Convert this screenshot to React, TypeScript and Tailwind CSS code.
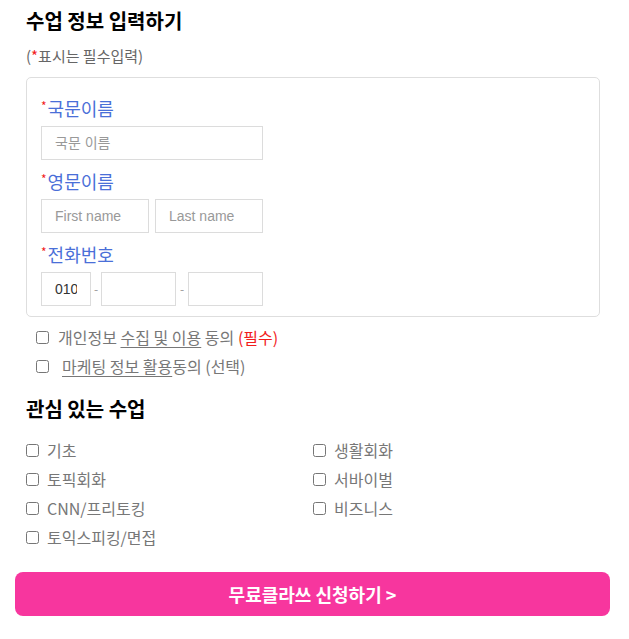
import React from 'react'

const KR = "font-['Noto_Sans_CJK_KR',sans-serif]"

function Label({ children }: { children: React.ReactNode }) {
  return (
    <div className="flex items-start text-[18px] leading-[24px] text-[#4a6fd8]">
      <span className="text-[12px] leading-[16px] text-[#f21c1c] mr-[1px] mt-[2px]">*</span>
      {children}
    </div>
  )
}

function Field({ placeholder, value, w }: { placeholder?: string; value?: string; w: string }) {
  return (
    <input
      readOnly
      defaultValue={value}
      placeholder={placeholder}
      className={`h-[34px] ${w} border border-[#dcdcdc] px-[13px] text-[14px] text-[#333] placeholder:text-[#999] outline-none font-['Liberation_Sans','Noto_Sans_CJK_KR',sans-serif]`}
    />
  )
}

const classes = [
  ['기초', '생활회화'],
  ['토픽회화', '서바이벌'],
  ['CNN/프리토킹', '비즈니스'],
  ['토익스피킹/면접', ''],
]

export default function App() {
  return (
    <div className={`w-[629px] min-h-[639px] bg-white pt-[6px] ${KR}`}>
      <div className="px-[26px]">
        <h2 className="text-[20px] font-bold leading-[30px] text-black">수업 정보 입력하기</h2>
        <p className="mt-[10px] text-[15px] leading-[20px] text-[#666]">
          (<span className="text-[#f21c1c]">*</span>표시는 필수입력)
        </p>

        <div className="mt-[11px] w-[574px] rounded-[5px] border border-[#dedede] px-[14px] pt-[18px] pb-[10px]">
          <Label>국문이름</Label>
          <div className="mt-[6px]">
            <Field placeholder="국문 이름" w="w-[222px]" />
          </div>

          <div className="mt-[9px]">
            <Label>영문이름</Label>
          </div>
          <div className="mt-[6px] flex gap-[6px]">
            <Field placeholder="First name" w="w-[108px]" />
            <Field placeholder="Last name" w="w-[108px]" />
          </div>

          <div className="mt-[9px]">
            <Label>전화번호</Label>
          </div>
          <div className="mt-[6px] flex items-center">
            <Field value="010" w="w-[50px]" />
            <span className="w-[10px] text-center text-[12px] text-[#999]">-</span>
            <Field w="w-[75px]" />
            <span className="w-[12px] text-center text-[12px] text-[#999]">-</span>
            <Field w="w-[75px]" />
          </div>
        </div>
      </div>

      <div className="mt-[6px] pl-[32px] text-[16px] leading-[29px] text-[#777]">
        <label className="flex items-center">
          <input type="checkbox" className="m-0 ml-[4px] h-[13px] w-[13px]" />
          <span className="ml-[9px]">
            개인정보 <span className="underline underline-offset-[3px]">수집 및 이용</span> 동의{' '}
            <span className="text-[#f21c1c]">(필수)</span>
          </span>
        </label>
        <label className="flex items-center">
          <input type="checkbox" className="m-0 ml-[4px] h-[13px] w-[13px]" />
          <span className="ml-[13px]">
            <span className="underline underline-offset-[3px]">마케팅 정보 활용</span>동의 (선택)
          </span>
        </label>
      </div>

      <div className="px-[26px]">
        <h3 className="mt-[14px] text-[20px] font-bold leading-[28px] text-black">관심 있는 수업</h3>
        <div className="mt-[13px] grid grid-cols-[287px_1fr] text-[16px] leading-[29px] text-[#777]">
          {classes.flat().map((c, i) =>
            c ? (
              <label key={i} className="flex items-center">
                <input type="checkbox" className="m-0 h-[13px] w-[13px]" />
                <span className="ml-[8px]">{c}</span>
              </label>
            ) : (
              <div key={i} />
            )
          )}
        </div>
      </div>

      <div className="mt-[20px] px-[15px]">
        <button className="flex h-[44px] w-[595px] items-center justify-center rounded-[8px] bg-[#f7369e] text-[18px] font-bold text-white">
          무료클라쓰 신청하기 &gt;
        </button>
      </div>
    </div>
  )
}
